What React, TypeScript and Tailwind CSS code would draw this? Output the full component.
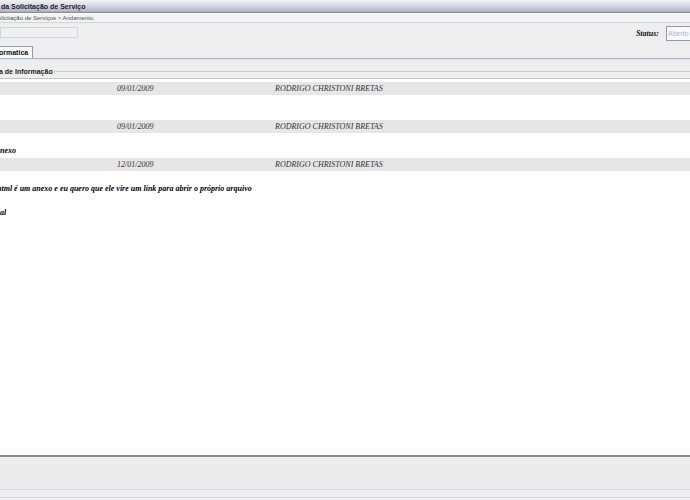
const entries = [
  { date: "09/01/2009", author: "RODRIGO CHRISTONI BRETAS", lines: [""] },
  { date: "09/01/2009", author: "RODRIGO CHRISTONI BRETAS", lines: ["anexo"] },
  {
    date: "12/01/2009",
    author: "RODRIGO CHRISTONI BRETAS",
    lines: ["html é um anexo e eu quero que ele vire um link para abrir o próprio arquivo", "", "al"],
  },
] as const;

function Entry({ date, author, lines }: { date: string; author: string; lines: readonly string[] }) {
  return (
    <div className="pb-px">
      {/* header bar */}
      <div className="grid h-[13px] grid-cols-[117px_158px_1fr] bg-[#e6e6e6] font-['Liberation_Serif',serif] text-[8px] italic leading-[13px] text-[#333]">
        <span />
        <span>{date}</span>
        <span>{author}</span>
      </div>

      {/* body */}
      <div className="pt-[12px] font-['Liberation_Serif',serif] text-[8px] font-bold italic leading-[12px] text-black">
        {lines.map((line, i) => (
          <div key={i} className="h-[12px] whitespace-nowrap">
            {i === 0 && line ? (
              <span className={line === "anexo" ? "-ml-[4px] inline-block" : "-ml-[3px] inline-block"}>{line}</span>
            ) : (
              line
            )}
          </div>
        ))}
      </div>
    </div>
  );
}

export default function App() {
  return (
    <div className="flex h-[500px] w-[690px] flex-col overflow-hidden bg-white font-['Liberation_Sans',sans-serif]">
      {/* title bar */}
      <div className="h-[13px] border-b border-[#8a8a8e] bg-gradient-to-b from-[#f2f2f6] via-[#d6d6e2] to-[#aeaec4] pl-[1px] text-[7px] font-bold leading-[13px] text-[#1a1a1a]">
        da Solicitação de Serviço
      </div>

      {/* breadcrumb */}
      <div className="h-[10px] border-t border-b border-t-white border-b-[#cfd5dd] bg-[#f2f2f2] text-[6px] leading-[8px] text-[#555]">
        <span className="-ml-[2px] inline-block">olicitação de Serviços &gt; Andamento</span>
      </div>

      {/* toolbar */}
      <div className="flex h-[35px] flex-col bg-[#eeeeee]">
        <div className="flex h-[23px] items-start justify-between">
          <div className="mt-[4px] h-[11px] w-[78px] border border-[#d0d7df] bg-[#f0f0f0]" />
          <div className="mt-[3px] flex items-center gap-[7px]">
            <span className="font-['Liberation_Serif',serif] text-[8px] font-bold italic text-[#111]">Status:</span>
            <div className="h-[15px] w-[24px] overflow-hidden whitespace-nowrap border border-r-0 border-[#8c9cb0] bg-[#f8f8fa] pl-[1px] text-[7px] leading-[13px] text-[#a9b8d0]">
              Aberto
            </div>
          </div>
        </div>
        <div className="flex h-[12px]">
          <div className="border-t border-r border-[#9a9a9a] bg-[#f8f8f8] pr-[4px] text-[7px] font-bold leading-[11px] text-[#111]">
            <span className="-ml-[1px] inline-block">ormatica</span>
          </div>
        </div>
      </div>

      {/* tab underline */}
      <div className="h-[2px] border-t border-b border-t-[#a9b8cf] border-b-[#dde3ec]" />

      {/* fieldset legend */}
      <div className="h-[19px] border-b border-[#c4c4c4] bg-[#eeeeee]">
        <div className="mt-[8px] flex h-[7px] items-center gap-[2px]">
          <span className="-ml-[1px] whitespace-nowrap text-[7px] font-bold leading-[7px] text-[#222]">a de Informação</span>
          <div className="h-px flex-1 bg-[#c8c8c8]" />
        </div>
      </div>

      {/* content */}
      <div className="flex-1 pt-[3px]">
        {entries.map((e, i) => (
          <Entry key={i} date={e.date} author={e.author} lines={e.lines} />
        ))}
      </div>

      {/* footer */}
      <div className="flex h-[45px] flex-col border-t-2 border-[#8a8a8a]">
        <div className="flex-1 border-t border-[#f6f6f8] bg-[#ececec]" />
        <div className="h-[9px] border-t border-b border-[#d6dae2] bg-[#eeeef2]" />
        <div className="h-[2px] bg-[#f0f0f2]" />
      </div>
    </div>
  );
}
